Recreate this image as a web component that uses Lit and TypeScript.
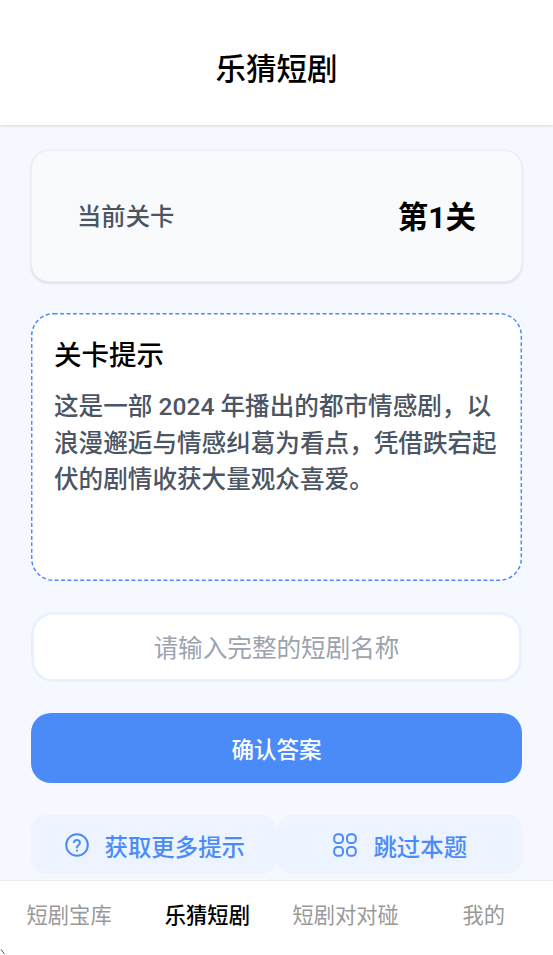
import { LitElement, html, css } from "lit";
import { customElement } from "lit/decorators.js";

@customElement("app-root")
export class AppRoot extends LitElement {
  static styles = css`
    :host {
      display: flex;
      flex-direction: column;
      position: relative;
      width: 553px;
      height: 955px;
      overflow: hidden;
      background: #f5f8ff;
      font-family: Roboto, "Noto Sans CJK SC", sans-serif;
      color: #000;
    }
    .header {
      flex: none;
      height: 125px;
      box-sizing: border-box;
      padding-top: 9px;
      background: #fff;
      display: flex;
      align-items: center;
      justify-content: center;
      font-size: 30.5px;
      font-weight: 500;
      box-shadow: 0 1px 3px rgba(0, 0, 0, 0.13);
      position: relative;
    }
    .main {
      flex: 1;
      min-height: 0;
      box-sizing: border-box;
      padding: 25px 31px 0 31px;
      display: flex;
      flex-direction: column;
    }
    .level {
      height: 132px;
      box-sizing: border-box;
      background: #f9fafc;
      border: 1px solid #eef0f4;
      border-radius: 18px;
      box-shadow: 0 1px 3px rgba(0, 0, 0, 0.14);
      display: flex;
      align-items: center;
      justify-content: space-between;
      padding: 0 45px 3px 45px;
    }
    .level-label {
      font-size: 24.32px;
      font-weight: 500;
      color: #4b5563;
    }
    .level-value {
      font-size: 30.4px;
      font-weight: 700;
    }
    .hint {
      position: relative;
      margin-top: 31px;
      height: 268px;
      box-sizing: border-box;
      background: #fff;
      border-radius: 22px;
      padding: 24px 20px 0 23px;
    }
    .hint svg {
      position: absolute;
      left: 0;
      top: 0;
      width: 491px;
      height: 268px;
      fill: none;
      stroke: #4b8bf8;
      stroke-width: 1.5;
      stroke-dasharray: 4 2.4;
    }
    .hint-title {
      font-size: 27.5px;
      font-weight: 500;
      line-height: 38px;
    }
    .hint-text {
      margin-top: 14px;
      font-size: 24.6px;
      font-weight: 500;
      line-height: 36.5px;
      color: #4b5563;
    }
    .answer {
      margin-top: 31px;
      height: 70px;
      box-sizing: border-box;
      padding-bottom: 2px;
      background: #fff;
      border: 3px solid #e9f1ff;
      border-radius: 22px;
      display: flex;
      align-items: center;
      justify-content: center;
      font-size: 24.6px;
      color: #9ca3af;
    }
    .confirm {
      margin-top: 31px;
      height: 70px;
      border-radius: 20px;
      background: #4b8bf8;
      color: #fff;
      display: flex;
      align-items: center;
      justify-content: center;
      font-size: 22.5px;
      font-weight: 500;
    }
    .actions {
      margin-top: 32px;
      display: grid;
      grid-template-columns: 1fr 1fr;
    }
    .action {
      height: 59px;
      box-sizing: border-box;
      padding: 2px 0 0 2px;
      border-radius: 16px;
      background: #edf3ff;
      color: #4b8bf8;
      display: flex;
      align-items: center;
      justify-content: center;
      gap: 16px;
      font-size: 23.4px;
      font-weight: 500;
    }
    .action svg {
      flex: none;
      width: 24px;
      height: 24px;
      margin-top: -2px;
      fill: none;
      stroke: #4b8bf8;
      stroke-width: 2;
    }
    .tabs {
      flex: none;
      height: 75px;
      box-sizing: border-box;
      background: #fff;
      border-top: 1px solid #e8ebf0;
      display: grid;
      grid-template-columns: repeat(4, 1fr);
      padding: 0 0 9px;
      align-items: center;
      justify-items: center;
      font-size: 21.28px;
      color: #999;
    }
    .tabs .on {
      color: #000;
      font-weight: 500;
    }
    .corner {
      position: absolute;
      left: 0;
      bottom: 0;
      width: 6px;
      height: 6px;
      fill: none;
      stroke: #555;
      stroke-width: 1;
    }
  `;

  render() {
    return html`
      <div class="header">乐猜短剧</div>
      <div class="main">
        <div class="level">
          <span class="level-label">当前关卡</span>
          <span class="level-value">第1关</span>
        </div>
        <div class="hint">
          <svg viewBox="0 0 491 268">
            <rect x="0.7" y="0.7" width="489.6" height="266.6" rx="22" ry="22" />
          </svg>
          <div class="hint-title">关卡提示</div>
          <div class="hint-text">
            这是一部 2024 年播出的都市情感剧，以浪漫邂逅与情感纠葛为看点，凭借跌宕起伏的剧情收获大量观众喜爱。
          </div>
        </div>
        <div class="answer">请输入完整的短剧名称</div>
        <div class="confirm">确认答案</div>
        <div class="actions">
          <div class="action">
            <svg viewBox="0 0 24 24">
              <circle cx="12" cy="12" r="10.8" />
              <path d="M9 9.2a3 3 0 0 1 5.9.8c0 2-3 2.6-3 4.4" stroke-linecap="round" />
              <path d="M12 17.6v.2" stroke-linecap="round" />
            </svg>
            获取更多提示
          </div>
          <div class="action">
            <svg viewBox="0 0 24 24">
              <rect x="1.2" y="1.2" width="8.8" height="8.8" rx="3.6" />
              <rect x="14" y="1.2" width="8.8" height="8.8" rx="3.6" />
              <rect x="1.2" y="14" width="8.8" height="8.8" rx="3.6" />
              <rect x="14" y="14" width="8.8" height="8.8" rx="3.6" />
            </svg>
            跳过本题
          </div>
        </div>
      </div>
      <div class="tabs">
        <span>短剧宝库</span>
        <span class="on">乐猜短剧</span>
        <span>短剧对对碰</span>
        <span>我的</span>
      </div>
      <svg class="corner" viewBox="0 0 6 6"><path d="M1 0.5 L4.5 5" /></svg>
    `;
  }
}
